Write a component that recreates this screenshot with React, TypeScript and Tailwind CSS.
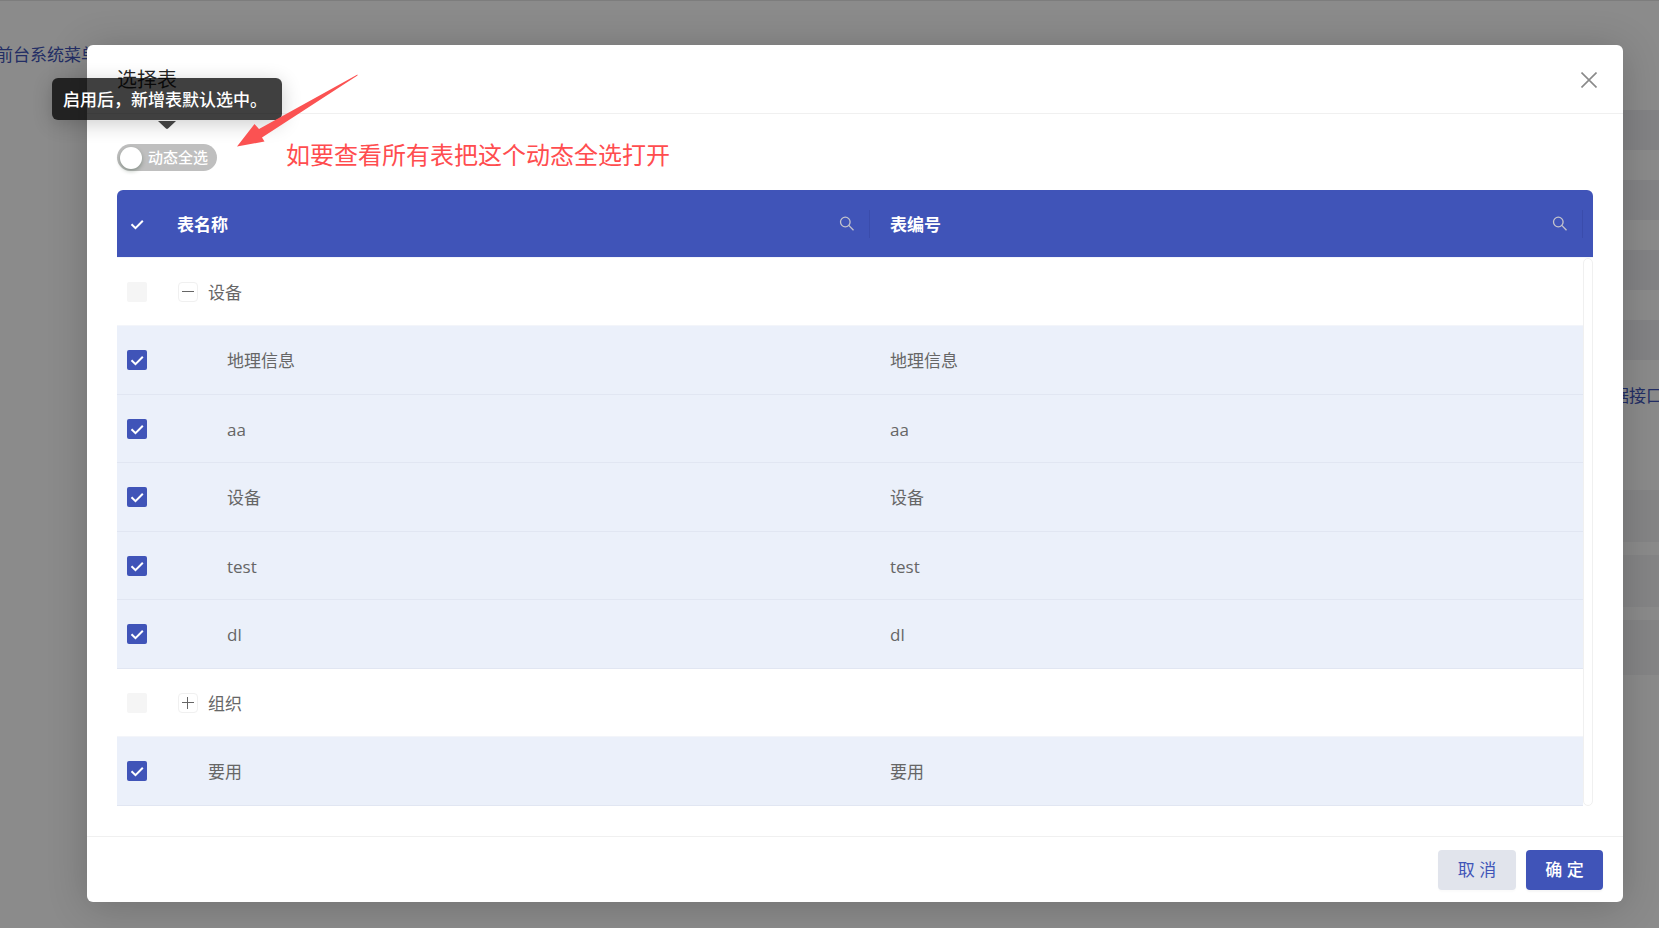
import { useState } from 'react'

interface Row {
  id: string
  name: string
  code: string
  kind: 'group' | 'child' | 'leaf'
  open?: boolean
}

const rows: Row[] = [
  { id: 'g1', name: '设备', code: '', kind: 'group', open: true },
  { id: 'r1', name: '地理信息', code: '地理信息', kind: 'child' },
  { id: 'r2', name: 'aa', code: 'aa', kind: 'child' },
  { id: 'r3', name: '设备', code: '设备', kind: 'child' },
  { id: 'r4', name: 'test', code: 'test', kind: 'child' },
  { id: 'r5', name: 'dl', code: 'dl', kind: 'child' },
  { id: 'g2', name: '组织', code: '', kind: 'group', open: false },
  { id: 'r6', name: '要用', code: '要用', kind: 'leaf' },
]

function CheckBox({ label, checked, disabled, onChange }: {
  label: string
  checked: boolean
  disabled?: boolean
  onChange?: () => void
}) {
  return (
    <label className="relative mx-auto block h-5 w-5">
      <input
        type="checkbox"
        aria-label={label}
        checked={checked}
        disabled={disabled}
        onChange={onChange}
        className="peer block h-5 w-5 appearance-none rounded-xs bg-white checked:bg-[#4054b8] disabled:bg-[#f5f5f5]"
      />
      <svg viewBox="0 0 20 20" className="pointer-events-none absolute inset-0 hidden peer-checked:block" fill="none" stroke="#fff" strokeWidth="2">
        <path d="M4.5 10.2 8.5 14.2 15.8 6.8" />
      </svg>
    </label>
  )
}

function SearchButton({ label }: { label: string }) {
  return (
    <button type="button" aria-label={label} className="h-4 w-4">
      <svg viewBox="0 0 16 16" className="h-4 w-4" fill="none" stroke="#c4c4cc" strokeWidth="1.3">
        <circle cx="6.3" cy="6" r="4.8" />
        <path d="M9.8 9.4 14.5 14.2" />
      </svg>
    </button>
  )
}

function Expander({ open, label }: { open?: boolean; label: string }) {
  return (
    <button
      type="button"
      aria-label={label}
      aria-expanded={open}
      className="flex h-5 w-5 shrink-0 items-center justify-center rounded border border-[#f0f0f0] bg-white"
    >
      <svg viewBox="0 0 12 12" className="h-3 w-3" stroke="#666" strokeWidth="1">
        <path d="M0 5.5h12" />
        {!open && <path d="M5.5 0v12" />}
      </svg>
    </button>
  )
}

// Page that sits under the mask
function Backdrop() {
  return (
    <div className="absolute inset-0 flex justify-between overflow-hidden border-t border-[#e4e4e4] bg-[#fdfdfd] text-[17px] leading-6 text-[#4054b8]">
      <a href="#menu" className="-ml-1 pt-[42px] whitespace-nowrap">前台系统菜单</a>
      <div className="w-40 shrink-0 pt-[109px]">
        <div className="flex flex-col gap-[30px]">
          {[0, 1, 2, 3].map((i) => (
            <div key={i} className="h-10 bg-[#eeeff2]" />
          ))}
        </div>
        <a href="#api" className="mt-6 -mr-1 block text-right">数据接口</a>
        <div className="mt-[82px] flex flex-col gap-[13px]">
          <div className="h-[52px] bg-[#f2f2f5]" />
          <div className="h-[52px] bg-[#f2f2f5]" />
          <div className="h-[55px] bg-[#f2f2f5]" />
        </div>
      </div>
    </div>
  )
}

export default function App() {
  const [dynamic, setDynamic] = useState(false)
  const [selected, setSelected] = useState<string[]>(['r1', 'r2', 'r3', 'r4', 'r5', 'r6'])

  const toggle = (id: string) =>
    setSelected((s) => (s.includes(id) ? s.filter((x) => x !== id) : [...s, id]))

  const leaves = rows.filter((r) => r.kind !== 'group').map((r) => r.id)
  const all = leaves.every((id) => selected.includes(id))

  return (
    <div className="relative min-h-screen font-['Open_Sans','Noto_Sans_CJK_SC',sans-serif] text-[17px] text-[#666]">
      <Backdrop />
      <div className="relative min-h-screen bg-black/45 pt-[45px] pr-9 pb-6 pl-[87px]">
        <div role="dialog" aria-labelledby="dialog-title" className="rounded-md bg-white shadow-[0_4px_40px_rgba(0,0,0,0.2)]">
          <header className="flex h-[69px] items-center justify-between border-b border-[#f0f0f0] pt-0.5 pr-6 pl-[30px]">
            <h2 id="dialog-title" className="text-xl text-black/85">选择表</h2>
            <button type="button" aria-label="关闭" className="flex h-5 w-5 items-center justify-center">
              <svg viewBox="0 0 16 16" className="h-4 w-4" stroke="#8a8a8a" strokeWidth="1.6">
                <path d="M.5.5l15 15M15.5.5l-15 15" />
              </svg>
            </button>
          </header>

          <div className="p-[30px]">
            <div className="relative flex h-[27px] items-center">
              <div className="relative">
                <button
                  type="button"
                  role="switch"
                  aria-checked={dynamic}
                  aria-describedby="switch-tip"
                  onClick={() => setDynamic(!dynamic)}
                  className="flex h-[27px] w-[100px] items-center gap-1.5 rounded-full bg-[#bfbfbf] pl-[3px] text-[15px] font-medium text-white aria-checked:bg-[#4054b8]"
                >
                  <span className="h-[22px] w-[22px] rounded-full bg-white shadow-[0_2px_4px_rgba(0,35,11,0.3)]" />
                  动态全选
                </button>
                <div id="switch-tip" role="tooltip" className="absolute bottom-full left-1/2 mb-[15px] -translate-x-1/2">
                  <div className="flex h-[51px] flex-col items-center">
                    <div className="flex h-[42px] w-[230px] shrink-0 items-center rounded-md bg-black/75 px-[11px] pt-0.5 font-medium whitespace-nowrap text-white shadow-[0_4px_20px_rgba(0,0,0,0.2)]">
                      启用后，新增表默认选中。
                    </div>
                    <svg viewBox="0 0 20 9" className="h-[9px] w-5 shrink-0" fill="#404040">
                      <path d="M1 1h18l-8 7.5q-1 .8-2 0z" />
                    </svg>
                  </div>
                </div>
              </div>
              <p className="ml-[69px] pb-1.5 text-2xl text-[#ff4d4f]">如要查看所有表把这个动态全选打开</p>
              <svg viewBox="0 0 122 74" className="pointer-events-none absolute bottom-6 left-[119px] h-[74px] w-[122px]" fill="#fb5252">
                <path d="M1 73.5 18.5 51 23 56 121.5 1.500 121.500 2.500 26 64.500 28.500 68.500z" />
              </svg>
            </div>

            <table className="mt-[19px] w-full table-fixed border-separate border-spacing-0 text-left">
              <colgroup>
                <col className="w-10" />
                <col />
                <col />
                <col className="w-2.5" />
              </colgroup>
              <thead>
                <tr className="h-[68px] text-white">
                  <th className="rounded-tl-md border-b border-[#f3f5fa] bg-[#4054b8] bg-clip-padding p-0">
                    <CheckBox label="全选" checked={all} onChange={() => setSelected(all ? [] : leaves)} />
                  </th>
                  <th className="border-b border-[#f3f5fa] bg-[#4054b8] p-0">
                    <div className="flex h-7 items-center justify-between border-r border-[#3a4cac] pr-3.5 pl-5">
                      <span className="pt-0.5 font-bold">表名称</span>
                      <SearchButton label="搜索表名称" />
                    </div>
                  </th>
                  <th className="border-b border-[#f3f5fa] bg-[#4054b8] p-0">
                    <div className="flex h-7 items-center justify-between border-r border-[#3a4cac] pr-3.5 pl-5">
                      <span className="pt-0.5 font-bold">表编号</span>
                      <SearchButton label="搜索表编号" />
                    </div>
                  </th>
                  <td className="rounded-tr-md border-b border-[#f3f5fa] bg-[#4054b8] p-0" />
                </tr>
              </thead>
              <tbody>
                {rows.map((row, i) => {
                  const on = selected.includes(row.id)
                  const cell = on ? 'border-b border-[#e1e6f2] bg-[#ebf0fa] p-0' : 'border-b border-[#f3f5fa] bg-white p-0'
                  return (
                    <tr key={row.id} className={i % 2 ? 'h-[69px]' : 'h-[68px]'}>
                      <td className={cell}>
                        <CheckBox
                          label={row.name}
                          checked={on}
                          disabled={row.kind === 'group'}
                          onChange={() => toggle(row.id)}
                        />
                      </td>
                      <td className={cell}>
                        {row.kind === 'group' ? (
                          <div className="flex items-center gap-2.5 pl-[21px]">
                            <Expander open={row.open} label={row.name} />
                            <span className="pt-0.5">{row.name}</span>
                          </div>
                        ) : (
                          <div className={row.kind === 'child' ? 'pt-0.5 pl-[70px]' : 'pt-0.5 pl-[51px]'}>{row.name}</div>
                        )}
                      </td>
                      <td className={cell}>
                        <div className="pt-0.5 pl-5">{row.code}</div>
                      </td>
                      {i === 0 && (
                        <td rowSpan={rows.length} className="rounded-lg border border-[#f0f0f0] bg-white p-0" />
                      )}
                    </tr>
                  )
                })}
              </tbody>
            </table>
          </div>

          <footer className="flex h-[66px] items-center justify-end gap-2.5 border-t border-[#f0f0f0] pr-5">
            <button type="button" className="h-10 w-[78px] rounded bg-[#e1e4ec] text-[#4054b8] shadow-[0_2px_2px_rgba(0,0,0,0.02)]">取 消</button>
            <button type="button" className="h-10 w-[77px] rounded bg-[#4054b8] font-medium text-white shadow-[0_2px_2px_rgba(0,0,0,0.04)]">确 定</button>
          </footer>
        </div>
      </div>
    </div>
  )
}
